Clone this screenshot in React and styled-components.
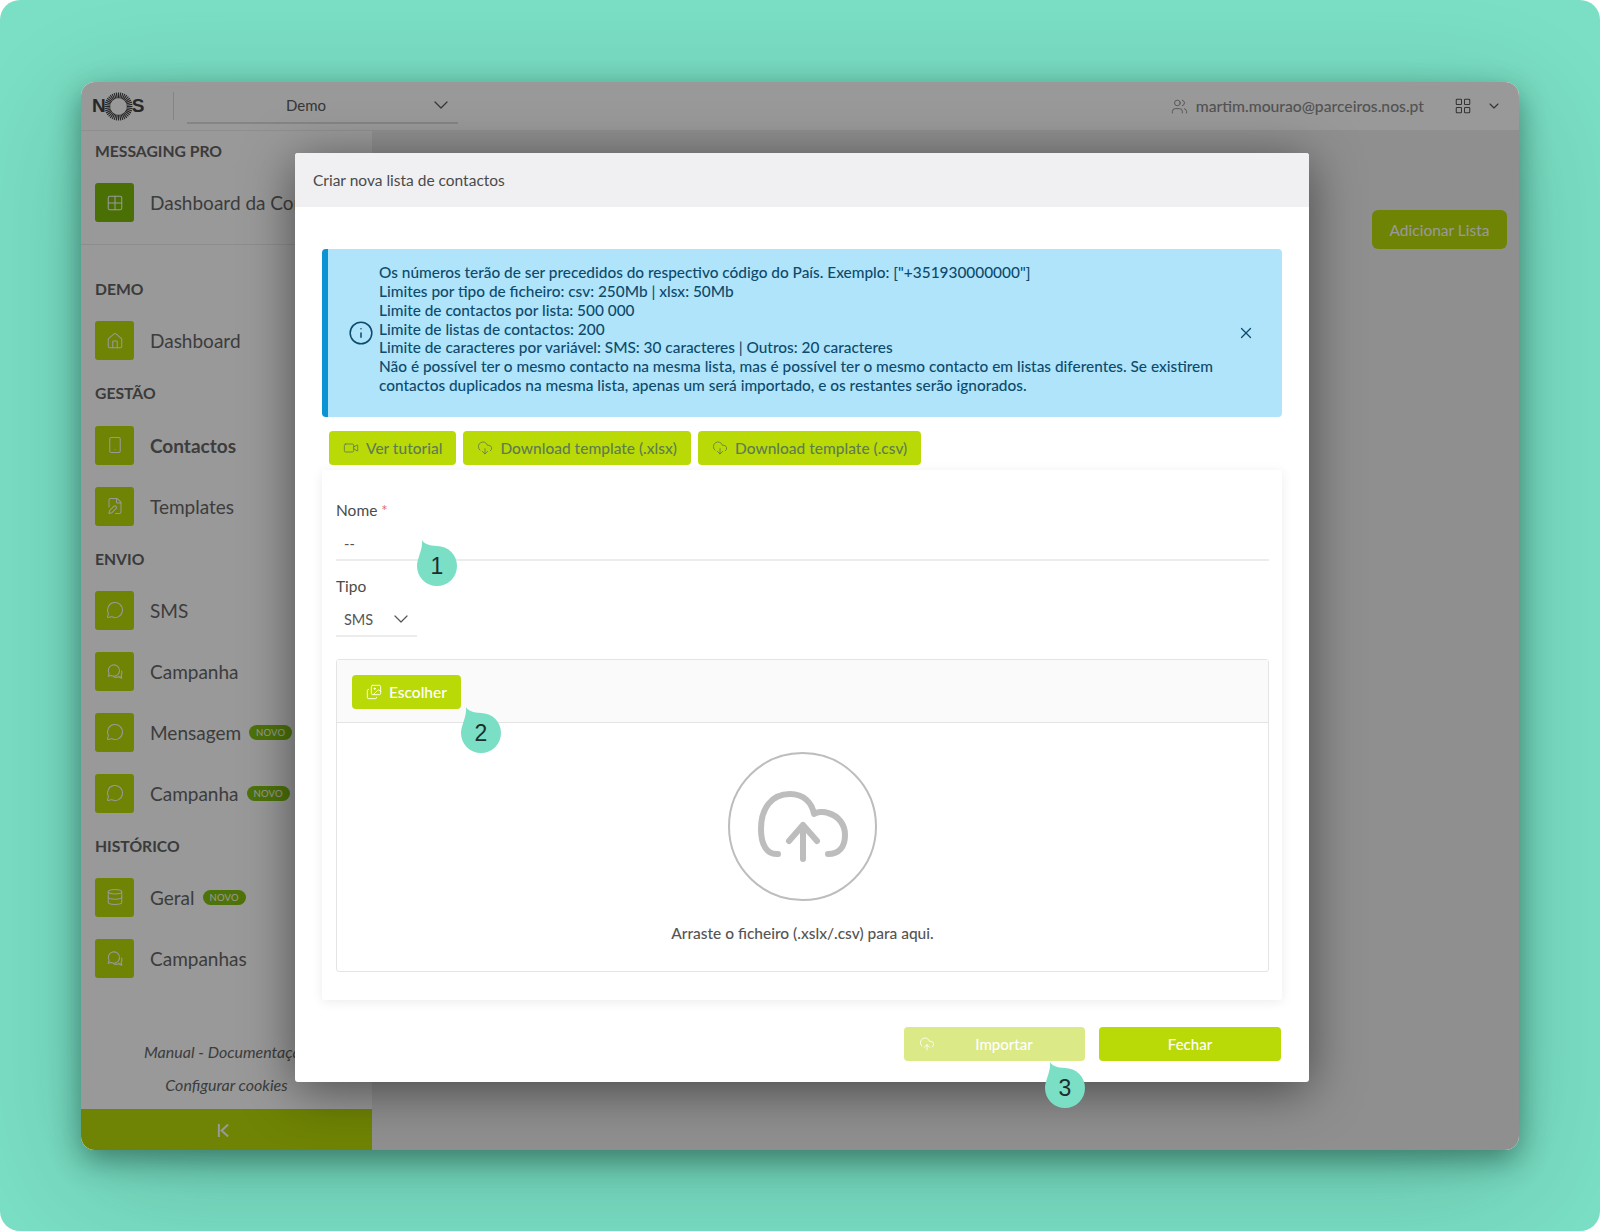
import React from 'react';
import styled, { createGlobalStyle } from 'styled-components';
import {
  ChevronDown,
  CloudDownload,
  CloudUpload,
  Database,
  FilePen,
  Grid2x2,
  House,
  Images,
  Info,
  LayoutGrid,
  MessageCircle,
  Smartphone,
  Users,
  Video,
  X,
} from 'lucide-react';

const FONT = 'Lato, "Open Sans", sans-serif';
const LIME = '#bada08';
const TEAL = '#7adfc5';

const GlobalStyle = createGlobalStyle`
  html, body { margin: 0; padding: 0; background: #fff; }
  body { font-family: ${FONT}; }
  * { box-sizing: border-box; }
`;

const Stage = styled.div`
  width: 1600px;
  height: 1231px;
  background: ${TEAL};
  border-radius: 20px;
  padding: 82px 81px 81px 81px;
  display: flex;
`;

const Window = styled.div`
  position: relative;
  flex: 1;
  display: flex;
  flex-direction: column;
  background: #fff;
  border-radius: 14px;
  overflow: hidden;
  box-shadow: 0 10px 30px rgba(0, 30, 20, 0.45), 0 30px 120px rgba(0, 40, 30, 0.2);
`;

const Topbar = styled.header`
  height: 49px;
  flex: none;
  display: flex;
  align-items: center;
  padding: 0 17px 0 11px;
  background: #fff;
  border-bottom: 1px solid #eee;
  color: #5e5e5e;
`;

const Logo = styled.div`
  display: flex;
  align-items: center;
  width: 81px;
  font-family: 'Liberation Sans', sans-serif;
  font-weight: 700;
  font-size: 19px;
  color: #444;
`;

const TopDivider = styled.div`
  width: 1px;
  height: 28px;
  background: #ddd;
`;

const DemoSelect = styled.div`
  margin-left: 13px;
  margin-bottom: 2px;
  width: 271px;
  height: 38px;
  padding-top: 2px;
  display: flex;
  align-items: center;
  border-bottom: 2px solid #dedede;
  font-size: 15px;
  color: #5c5c5c;
`;

const DemoLabel = styled.span`
  flex: 1;
  text-align: center;
  padding-right: 4px;
`;

const User = styled.div`
  margin-left: auto;
  display: flex;
  align-items: center;
  gap: 8px;
  font-size: 15.7px;
  font-weight: 500;
  color: #8a8a8a;
`;

const Apps = styled.div`
  display: flex;
  align-items: center;
  margin-left: 30px;
  gap: 14px;
  color: #555;
`;

const Content = styled.div`
  flex: 1;
  display: flex;
  min-height: 0;
`;

const Sidebar = styled.aside`
  width: 291px;
  flex: none;
  display: flex;
  flex-direction: column;
  background: #fff;
`;

const Nav = styled.nav`
  display: flex;
  flex-direction: column;
  gap: 22px;
  padding: 9px 14px 0 14px;
`;

const NavTitle = styled.div`
  height: 21.2px;
  line-height: 23.5px;
  font-size: 15.7px;
  font-weight: 700;
  color: #636363;
  margin-top: ${(p) => (p.$spaced ? '11px' : '0')};
`;

const NavDivider = styled.div`
  height: 1px;
  margin: 0 -14px;
  background: #ececec;
`;

const NavItem = styled.div`
  display: flex;
  align-items: center;
  height: 39px;
  white-space: nowrap;
  font-size: 19px;
  font-weight: ${(p) => (p.$active ? 700 : 400)};
  color: #666;
`;

const NavIcon = styled.div`
  width: 39px;
  height: 39px;
  flex: none;
  margin-right: 16px;
  border-radius: 3px;
  display: flex;
  align-items: center;
  justify-content: center;
  background: ${(p) => (p.$dark ? '#7cba08' : LIME)};
  color: #fff;
`;

const NewTag = styled.span`
  margin-left: 8px;
  padding: 0 7px;
  height: 15px;
  line-height: 15px;
  border-radius: 8px;
  background: #80c010;
  color: #fff;
  font-size: 9.5px;
  letter-spacing: 0.2px;
`;

const SideFooter = styled.div`
  margin-top: auto;
  display: flex;
  flex-direction: column;
  align-items: center;
  gap: 14px;
  padding-bottom: 15px;
  font-size: 16px;
  font-style: italic;
  color: #666;
  white-space: nowrap;
`;

const CollapseBar = styled.div`
  height: 41px;
  flex: none;
  display: flex;
  align-items: center;
  justify-content: center;
  padding: 2px 6px 0 0;
  background: ${LIME};
  color: #fff;
`;

const Main = styled.main`
  flex: 1;
  background: #efefef;
  display: flex;
  justify-content: flex-end;
  align-items: flex-start;
  padding: 79px 12px 0 0;
`;

const AddButton = styled.button`
  width: 135px;
  height: 39px;
  border: none;
  border-radius: 6px;
  background: ${LIME};
  color: #fff;
  font: 400 15.5px ${FONT};
`;

const Overlay = styled.div`
  position: absolute;
  inset: 0;
  background: rgba(0, 0, 0, 0.4);
  padding: 71px 0 0 214px;
`;

const Modal = styled.section`
  width: 1014px;
  height: 929px;
  background: #fff;
  border-radius: 3px;
  display: flex;
  flex-direction: column;
  box-shadow: 0 8px 50px rgba(0, 0, 0, 0.5);
`;

const ModalHeader = styled.div`
  height: 54px;
  flex: none;
  display: flex;
  align-items: center;
  padding-left: 18px;
  background: #f0f0f2;
  border-radius: 3px 3px 0 0;
  font-size: 15.5px;
  color: #4a4a4a;
`;

const ModalBody = styled.div`
  padding: 42px 27px 0 27px;
  display: flex;
  flex-direction: column;
`;

const Alert = styled.div`
  height: 168px;
  display: flex;
  align-items: center;
  background: #b0e4fb;
  border-left: 6px solid #0b93d3;
  border-radius: 4px;
  color: #0d4b6c;
  padding-left: 20px;
`;

const AlertText = styled.div`
  margin-left: 5px;
  margin-bottom: 8px;
  flex: 1;
  font-size: 15.4px;
  font-weight: 500;
  line-height: 18.9px;
  white-space: nowrap;
`;

const AlertClose = styled.div`
  display: flex;
  margin-right: 27px;
`;

const ActionRow = styled.div`
  display: flex;
  gap: 7px;
  padding: 14px 0 5.5px 7px;
`;

const LimeButton = styled.button`
  position: relative;
  height: 33.5px;
  padding: 0 14px;
  display: flex;
  align-items: center;
  gap: 7px;
  border: none;
  border-radius: 4px;
  background: ${LIME};
  color: ${(p) => (p.$muted ? '#5f7d4f' : '#fff')};
  font: 500 15.5px ${FONT};
  white-space: nowrap;
`;

const Card = styled.div`
  height: 530px;
  padding: 30px 13px 0 14px;
  border-radius: 3px;
  box-shadow: 0 2px 12px rgba(0, 0, 0, 0.08);
  display: flex;
  flex-direction: column;
`;

const Label = styled.div`
  font-size: 15.5px;
  line-height: 20px;
  color: #4b4b4b;
`;

const Required = styled.span`
  color: #e56a6a;
  font-size: 15px;
`;

const Field = styled.div`
  position: relative;
  height: ${(p) => p.$height}px;
  width: ${(p) => p.$width || '100%'};
  margin-top: ${(p) => p.$gap}px;
  margin-bottom: 15px;
  display: flex;
  align-items: center;
  justify-content: space-between;
  padding: 0 8px 2px 8px;
  border-bottom: 2px solid #ececec;
  font-size: 14.5px;
  color: #555;
`;

const Upload = styled.div`
  margin-top: 7px;
  height: 313px;
  border: 1px solid #e4e4e4;
  border-radius: 3px;
  display: flex;
  flex-direction: column;
`;

const UploadHeader = styled.div`
  height: 63px;
  flex: none;
  padding: 15px 0 0 15px;
  background: #fafafa;
  border-bottom: 1px solid #e4e4e4;
`;

const DropZone = styled.div`
  flex: 1;
  display: flex;
  flex-direction: column;
  align-items: center;
  padding-top: 29px;
  font-size: 15.5px;
  font-weight: 500;
  color: #555;
`;

const UploadCircle = styled.div`
  width: 149px;
  height: 149px;
  margin-bottom: 23px;
  border: 2px solid #bdbdbd;
  border-radius: 50%;
  display: flex;
  align-items: center;
  justify-content: center;
  color: #bdbdbd;
`;

const ModalFooter = styled.div`
  display: flex;
  justify-content: flex-end;
  gap: 14px;
  padding-top: 27px;
  padding-right: 1px;
`;

const WideButton = styled.button`
  position: relative;
  width: ${(p) => (p.$faded ? '181px' : '182px')};
  height: 34px;
  padding: 0 ${(p) => (p.$faded ? '12px' : '0')} 0 ${(p) => (p.$faded ? '15px' : '0')};
  display: flex;
  align-items: center;
  border: none;
  border-radius: 4px;
  background: ${(p) => (p.$faded ? '#dbe987' : LIME)};
  color: #fff;
  font: 500 15px ${FONT};
`;

const WideLabel = styled.span`
  flex: 1;
  text-align: center;
`;

const Marker = styled.div`
  position: absolute;
  top: ${(p) => p.$top}px;
  left: ${(p) => p.$left}px;
  width: 44px;
  height: 52px;
  z-index: 2;
`;

const MarkerNumber = styled.span`
  position: absolute;
  left: 2px;
  top: 11px;
  width: 40px;
  text-align: center;
  font: 400 23px / 40px 'Liberation Sans', sans-serif;
  color: #1f2d2d;
`;

const TwoBubbles = ({ size = 18 }) => (
  <svg width={size} height={size} viewBox="0 0 24 24" fill="none" stroke="currentColor" strokeWidth="1.5" strokeLinecap="round" strokeLinejoin="round">
    <path d="M3 19l1.2-3.6A7.5 7.5 0 1 1 7 18z" />
    <path d="M17 19.5l4 2-.8-3.4a6 6 0 0 0 .6-6.1" />
    <path d="M17 19.5a7 7 0 0 1-7 0" />
  </svg>
);

const Sunburst = () => (
  <svg width="29" height="29" viewBox="-15 -15 30 30" style={{ margin: '0 -1px 0 -2px' }}>
    {Array.from({ length: 40 }, (_, i) => {
      const a = (i / 40) * Math.PI * 2;
      return (
        <line
          key={i}
          x1={Math.cos(a) * 8.5}
          y1={Math.sin(a) * 8.5}
          x2={Math.cos(a) * 14.5}
          y2={Math.sin(a) * 14.5}
          stroke="#444"
          strokeWidth="1.2"
        />
      );
    })}
  </svg>
);

const CollapseIcon = () => (
  <svg width="13" height="15" viewBox="0 0 14 16" fill="none" stroke="currentColor" strokeWidth="2.2">
    <path d="M2 1v14" />
    <path d="M12 1.5L5 8l7 6.5" />
  </svg>
);

const BigCloud = () => (
  <svg width="100" height="100" viewBox="-50 -50 100 100" fill="none" stroke="currentColor" strokeWidth="6" strokeLinecap="round" strokeLinejoin="round">
    <path d="M-25 27C-36 28 -42 18 -42 2C-42 -18 -32 -33 -13 -33C1 -33 9 -24 11 -13C14 -15 20 -16 25 -14C36 -11 42 -2 42 8C42 20 36 27 25 27" />
    <path d="M0 32V-2M-14 14L0 -2L14 14" />
  </svg>
);

const StepMarker = ({ n, top, left }) => (
  <Marker $top={top} $left={left}>
    <svg width="44" height="52" viewBox="0 0 44 52">
      <path
        d="M7 5C9 9 14 10.5 22 11A20 20 0 1 1 2 31C2 23 8 15 7 5Z"
        fill={TEAL}
      />
    </svg>
    <MarkerNumber>{n}</MarkerNumber>
  </Marker>
);

const ic = { size: 18, strokeWidth: 1.4 };

const Item = ({ icon, label, active, dark, tag }) => (
  <NavItem $active={active}>
    <NavIcon $dark={dark}>{icon}</NavIcon>
    {label}
    {tag && <NewTag>NOVO</NewTag>}
  </NavItem>
);

const ALERT_LINES = [
  'Os números terão de ser precedidos do respectivo código do País. Exemplo: ["+351930000000"]',
  'Limites por tipo de ficheiro: csv: 250Mb | xlsx: 50Mb',
  'Limite de contactos por lista: 500 000',
  'Limite de listas de contactos: 200',
  'Limite de caracteres por variável: SMS: 30 caracteres | Outros: 20 caracteres',
  'Não é possível ter o mesmo contacto na mesma lista, mas é possível ter o mesmo contacto em listas diferentes. Se existirem',
  'contactos duplicados na mesma lista, apenas um será importado, e os restantes serão ignorados.',
];

const App = () => (
  <Stage>
    <GlobalStyle />
    <Window>
      <Topbar>
        <Logo>
          N
          <Sunburst />
          S
        </Logo>
        <TopDivider />
        <DemoSelect>
          <DemoLabel>Demo</DemoLabel>
          <ChevronDown size={24} strokeWidth={1.3} style={{ marginRight: 5 }} />
        </DemoSelect>
        <User>
          <Users size={17} strokeWidth={1.3} />
          martim.mourao@parceiros.nos.pt
        </User>
        <Apps>
          <LayoutGrid size={18} strokeWidth={1.4} />
          <ChevronDown size={16} strokeWidth={1.6} />
        </Apps>
      </Topbar>
      <Content>
        <Sidebar>
          <Nav>
            <NavTitle>MESSAGING PRO</NavTitle>
            <Item dark icon={<Grid2x2 {...ic} />} label="Dashboard da Conta" />
            <NavDivider />
            <NavTitle $spaced>DEMO</NavTitle>
            <Item icon={<House {...ic} />} label="Dashboard" />
            <NavTitle>GESTÃO</NavTitle>
            <Item active icon={<Smartphone {...ic} />} label="Contactos" />
            <Item icon={<FilePen {...ic} />} label="Templates" />
            <NavTitle>ENVIO</NavTitle>
            <Item icon={<MessageCircle {...ic} />} label="SMS" />
            <Item icon={<TwoBubbles />} label="Campanha" />
            <Item tag icon={<MessageCircle {...ic} />} label="Mensagem" />
            <Item tag icon={<MessageCircle {...ic} />} label="Campanha" />
            <NavTitle>HISTÓRICO</NavTitle>
            <Item tag icon={<Database {...ic} />} label="Geral" />
            <Item icon={<TwoBubbles />} label="Campanhas" />
          </Nav>
          <SideFooter>
            <span>Manual - Documentação</span>
            <span>Configurar cookies</span>
          </SideFooter>
          <CollapseBar>
            <CollapseIcon />
          </CollapseBar>
        </Sidebar>
        <Main>
          <AddButton>Adicionar Lista</AddButton>
        </Main>
      </Content>
      <Overlay>
        <Modal>
          <ModalHeader>Criar nova lista de contactos</ModalHeader>
          <ModalBody>
            <Alert>
              <Info size={26} strokeWidth={1.4} />
              <AlertText>
                {ALERT_LINES.map((line) => (
                  <div key={line}>{line}</div>
                ))}
              </AlertText>
              <AlertClose>
                <X size={18} strokeWidth={1.6} />
              </AlertClose>
            </Alert>
            <ActionRow>
              <LimeButton $muted>
                <Video size={16} strokeWidth={1.3} />
                Ver tutorial
              </LimeButton>
              <LimeButton $muted>
                <CloudDownload size={16} strokeWidth={1.3} />
                Download template (.xlsx)
              </LimeButton>
              <LimeButton $muted>
                <CloudDownload size={16} strokeWidth={1.3} />
                Download template (.csv)
              </LimeButton>
            </ActionRow>
            <Card>
              <Label>
                Nome <Required>*</Required>
              </Label>
              <Field $height={31} $gap={10}>
                --
                <StepMarker n={1} top={5} left={79} />
              </Field>
              <Label>Tipo</Label>
              <Field $height={32} $gap={9} $width="81px">
                SMS
                <ChevronDown size={24} strokeWidth={1.2} style={{ marginRight: -4 }} />
              </Field>
              <Upload>
                <UploadHeader>
                  <LimeButton>
                    <Images size={16} strokeWidth={1.4} />
                    Escolher
                    <StepMarker n={2} top={27} left={107} />
                  </LimeButton>
                </UploadHeader>
                <DropZone>
                  <UploadCircle>
                    <BigCloud />
                  </UploadCircle>
                  Arraste o ficheiro (.xslx/.csv) para aqui.
                </DropZone>
              </Upload>
            </Card>
            <ModalFooter>
              <WideButton $faded>
                <CloudUpload size={16} strokeWidth={1.3} />
                <WideLabel>Importar</WideLabel>
                <StepMarker n={3} top={30} left={139} />
              </WideButton>
              <WideButton>
                <WideLabel>Fechar</WideLabel>
              </WideButton>
            </ModalFooter>
          </ModalBody>
        </Modal>
      </Overlay>
    </Window>
  </Stage>
);

export default App;
